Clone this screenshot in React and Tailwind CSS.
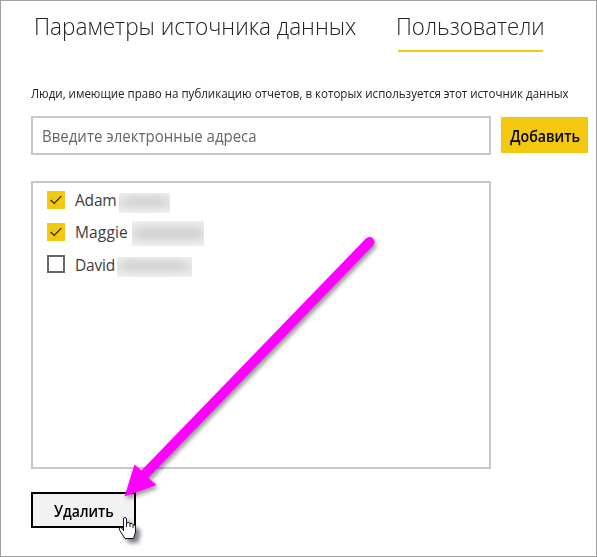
import React from "react";

function Check({ checked }) {
  return checked ? (
    <span className="flex h-[18px] w-[18px] shrink-0 items-center justify-center bg-[#f2c811]">
      <svg width="18" height="18" viewBox="0 0 18 18" fill="none" stroke="#222" strokeWidth="1.2">
        <path d="M3.7 9 L7.2 12.4 L14.3 5.1" />
      </svg>
    </span>
  ) : (
    <span className="h-[18px] w-[18px] shrink-0 border-2 border-[#666]" />
  );
}

function Person({ name, checked, nameClass, maskClass, smudgeClass }) {
  return (
    <label className="flex h-8 items-center">
      <Check checked={checked} />
      <span className={"ml-[10px] shrink-0 whitespace-nowrap text-[15.5px] text-[#3c3c3c] " + nameClass}>{name}</span>
      <span className={"flex shrink-0 items-center overflow-hidden bg-linear-to-b from-[#f0f0f0] via-[#e4e4e4] to-[#f0f0f0] " + maskClass}>
        <span className={"rounded-full bg-[#cfcfcf] blur-[5px] " + smudgeClass} />
      </span>
    </label>
  );
}

export default function App() {
  return (
    <main className="relative h-[557px] w-[597px] overflow-hidden border border-[#a0a0a0] bg-white font-['Open_Sans','Noto_Sans',sans-serif]">
      <nav className="flex h-[51px] pl-[33px] pt-[8px] text-[23.5px] font-light leading-[34px] text-[#222]">
        <div className="w-[364px] origin-left scale-x-[.96] whitespace-nowrap">Параметры источника данных</div>
        <div className="h-[43px] w-[145px] border-b-2 border-[#f2c811]">
          <span className="-ml-[2px] inline-block origin-left scale-x-[.945] whitespace-nowrap">Пользователи</span>
        </div>
      </nav>

      <section className="pl-[30px]">
        <p className="mt-8 h-[20px] origin-left scale-x-[.961] whitespace-nowrap text-[12px] leading-[20px] text-[#222]">
          Люди, имеющие право на публикацию отчетов, в которых используется этот источник данных
        </p>
        <div className="mt-3 flex gap-[10px]">
          <div className="flex h-[39px] w-[460px] items-center border-2 border-[#c8c8c8] pl-[9px] pt-[3px] text-[15.5px] text-[#666]">
            <span className="origin-left scale-x-[.968] whitespace-nowrap">Введите электронные адреса</span>
          </div>
          <button className="mt-px flex h-9 w-[87px] items-center justify-center bg-[#f2c811] pl-px pt-[3px] text-[15.5px] font-semibold text-black">
            <span className="scale-x-[.915] whitespace-nowrap">Добавить</span>
          </button>
        </div>

        <div className="mt-[26px] h-[288px] w-[460px] border-2 border-[#c8c8c8] pl-[14px] pt-px">
          <Person name="Adam" checked nameClass="w-[44px] pt-[2px] tracking-[-0.2px]" maskClass="mt-[6px] h-5 w-[51px]" smudgeClass="-mt-1 ml-1 h-[9px] w-[43px]" />
          <Person name="Maggie" checked nameClass="w-[57px] pt-[2px] tracking-[0.15px]" maskClass="mt-[3px] h-[25px] w-[72px]" smudgeClass="ml-1 h-[11px] w-[66px]" />
          <Person name="David" nameClass="w-[42px] pt-[4px] tracking-[-0.2px]" maskClass="mt-[6px] h-5 w-[75px]" smudgeClass="-mt-1 ml-1 h-[9px] w-[66px]" />
        </div>

        <button className="mt-[23px] flex h-9 w-[105px] items-center justify-center border-2 border-black bg-[#f2f2f2] pt-[3px] text-[15.5px] font-semibold text-black">
          <span className="scale-x-[.91] whitespace-nowrap">Удалить</span>
        </button>
      </section>

      <svg className="pointer-events-none absolute -left-px -top-px" width="597" height="557" viewBox="0 0 597 557">
        <g className="drop-shadow-[2px_3px_2px_rgba(0,0,0,0.4)]">
          <path d="M369.500 242 L143 476" stroke="#ff00ff" strokeWidth="10" strokeLinecap="round" />
          <path d="M124.500 496.500 L134.500 464.500 L142 471 L149 478.500 L156.500 485 Z" fill="#ff00ff" />
        </g>
        <path
          className="drop-shadow-[4px_4px_2px_rgba(0,0,0,0.5)]"
          d="M123.500 531 V519 Q123.500 517.500 125 517.500 Q126.500 517.500 126.500 519 V523 Q129.500 522 130 523.500 Q132.500 523 133 524.500 Q135.500 524.500 135.500 527 V532 L133.500 538.500 H125 L119.500 530 Q118.500 527.500 120.500 527.500 L123.500 530"
          fill="#fff"
          stroke="#10102c"
          strokeWidth="1"
        />
        <path d="M126.500 523 V527 M130 523.500 V527 M133 524.500 V528" fill="none" stroke="#10102c" />
      </svg>
    </main>
  );
}
